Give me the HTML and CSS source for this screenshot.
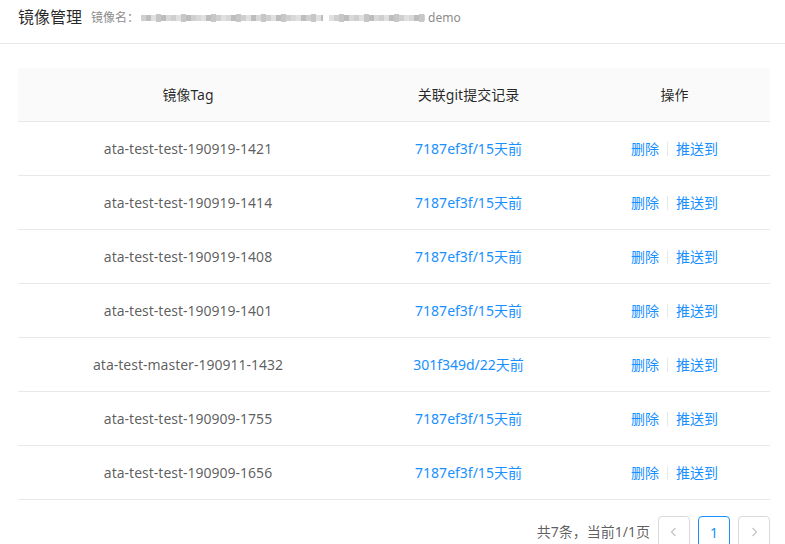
FILE: index.html
```html
<!DOCTYPE html>
<html lang="zh">
<head>
<meta charset="utf-8">
<link rel="stylesheet" href="styles.css">
</head>
<body>
<div class="header">
  <span class="title">镜像管理</span>
  <span class="sub">镜像名：</span>
  <span class="blur">
    <i class="b1"></i><i class="b2"></i><i class="b3"></i><i class="b4"></i><i class="b2"></i><i class="b5"></i><i class="b1"></i><i class="b3"></i><i class="b4"></i><i class="b2"></i><i class="b1"></i><i class="b5"></i><i class="b3"></i><i class="b2"></i><i class="b4"></i><i class="b1"></i><i class="b3"></i><i class="b5"></i><i class="b2"></i><i class="b4"></i><i class="b1"></i><i class="b3"></i><i class="b2"></i><i class="b5"></i><i class="b4"></i><i class="b1"></i><i class="b3"></i><i class="b2"></i><i class="b4"></i><i class="b1"></i><i class="b5"></i><i class="b3"></i><i class="b2"></i><i class="b1"></i><i class="b4"></i><i class="b3"></i><i class="b2"></i>
  </span>
  <span class="blur second">
    <i class="b3"></i><i class="b1"></i><i class="b4"></i><i class="b2"></i><i class="b5"></i><i class="b1"></i><i class="b3"></i><i class="b4"></i><i class="b2"></i><i class="b5"></i><i class="b1"></i><i class="b3"></i><i class="b2"></i><i class="b4"></i><i class="b1"></i><i class="b3"></i><i class="b5"></i><i class="b2"></i><i class="b4"></i><i class="b1"></i><i class="b3"></i>
  </span>
  <span class="sub">demo</span>
</div>
<div class="content">
  <table class="tbl">
    <thead>
      <tr><th class="c1">镜像Tag</th><th class="c2">关联git提交记录</th><th class="c3">操作</th></tr>
    </thead>
    <tbody>
      <tr><td>ata-test-test-190919-1421</td><td><a>7187ef3f/15天前</a></td><td><a>删除</a><span class="sep"></span><a>推送到</a></td></tr>
      <tr><td>ata-test-test-190919-1414</td><td><a>7187ef3f/15天前</a></td><td><a>删除</a><span class="sep"></span><a>推送到</a></td></tr>
      <tr><td>ata-test-test-190919-1408</td><td><a>7187ef3f/15天前</a></td><td><a>删除</a><span class="sep"></span><a>推送到</a></td></tr>
      <tr><td>ata-test-test-190919-1401</td><td><a>7187ef3f/15天前</a></td><td><a>删除</a><span class="sep"></span><a>推送到</a></td></tr>
      <tr><td>ata-test-master-190911-1432</td><td><a>301f349d/22天前</a></td><td><a>删除</a><span class="sep"></span><a>推送到</a></td></tr>
      <tr><td>ata-test-test-190909-1755</td><td><a>7187ef3f/15天前</a></td><td><a>删除</a><span class="sep"></span><a>推送到</a></td></tr>
      <tr><td>ata-test-test-190909-1656</td><td><a>7187ef3f/15天前</a></td><td><a>删除</a><span class="sep"></span><a>推送到</a></td></tr>
    </tbody>
  </table>
  <div class="pager">
    <span class="total">共7条，当前1/1页</span>
    <span class="pbtn"><svg width="12" height="12" viewBox="0 0 12 12"><path d="M7.5 2 L3.5 6 L7.5 10" fill="none" stroke="#c4c4c4" stroke-width="1.2"/></svg></span>
    <span class="pbtn active">1</span>
    <span class="pbtn"><svg width="12" height="12" viewBox="0 0 12 12"><path d="M4.5 2 L8.5 6 L4.5 10" fill="none" stroke="#c4c4c4" stroke-width="1.2"/></svg></span>
  </div>
</div>
</body>
</html>
```
FILE: styles.css
```css
html, body {
  margin: 0;
  padding: 0;
  background: #fff;
  font-family: "Noto Sans", "Noto Sans CJK SC", sans-serif;
  color: rgba(0, 0, 0, 0.65);
  font-size: 14px;
  overflow: hidden;
}
.header {
  height: 44px;
  box-sizing: border-box;
  border-bottom: 1px solid #e8e8e8;
  padding: 5px 18px 0;
  display: flex;
  align-items: flex-start;
}
.title {
  font-size: 16px;
  line-height: 24px;
  color: rgba(0, 0, 0, 0.85);
  margin-right: 9px;
}
.sub {
  font-size: 12px;
  line-height: 24px;
  color: #8c8c8c;
  padding-top: 1px;
}
.blur {
  display: flex;
  align-items: center;
  height: 25px;
  margin-left: 2px;
  width: 182px;
  overflow: hidden;
}
.blur.second {
  width: 96px;
  margin-left: 6px;
  margin-right: 3px;
}
.blur i {
  display: block;
  width: 5px;
  height: 6px;
  flex: none;
}
.b1 { background: #cfcfcf; }
.b2 { background: #bdbdbd; }
.b3 { background: #e0e0e0; }
.b4 { background: #c7c7c7; height: 8px !important; }
.b5 { background: #d8d8d8; }
.content {
  padding: 24px 15px 0 18px;
}
.tbl {
  width: 752px;
  border-collapse: separate;
  border-spacing: 0;
  table-layout: fixed;
}
.tbl th, .tbl td {
  box-sizing: border-box;
  padding: 16px;
  line-height: 21px;
  text-align: center;
  border-bottom: 1px solid #e8e8e8;
  font-weight: normal;
  white-space: nowrap;
}
.tbl th {
  background: #fafafa;
  color: rgba(0, 0, 0, 0.85);
}
.tbl th:first-child { border-top-left-radius: 4px; }
.tbl th:last-child { border-top-right-radius: 4px; }
.c1 { width: 340px; }
.c2 { width: 221px; }
.c3 { width: 191px; }
.tbl a {
  color: #1890ff;
}
.sep {
  display: inline-block;
  width: 1px;
  height: 14px;
  background: #e8e8e8;
  margin: 0 8px;
  vertical-align: -2px;
}
.pager {
  display: flex;
  justify-content: flex-end;
  align-items: center;
  margin-top: 16px;
  width: 752px;
}
.total {
  line-height: 32px;
}
.pbtn {
  width: 32px;
  height: 32px;
  box-sizing: border-box;
  border: 1px solid #d9d9d9;
  border-radius: 4px;
  display: flex;
  align-items: center;
  justify-content: center;
  margin-left: 8px;
  color: #1890ff;
}
.pbtn.active {
  border-color: #1890ff;
}
```
